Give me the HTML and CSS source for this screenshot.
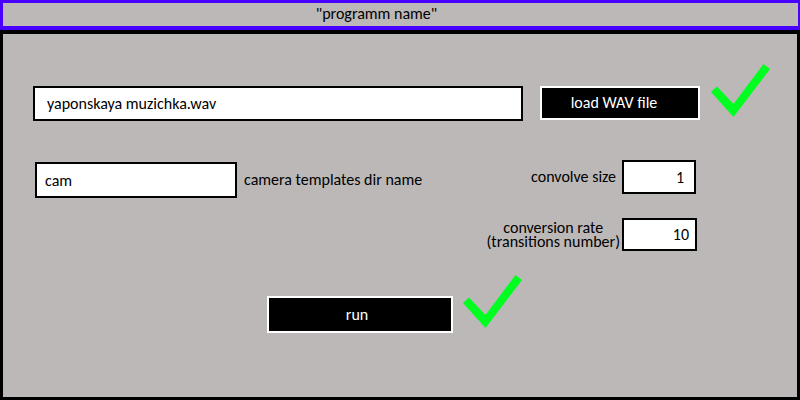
FILE: index.html
```html
<!DOCTYPE html>
<html lang="en">
<head>
  <meta charset="utf-8">
  <meta name="viewport" content="width=device-width, initial-scale=1">
  <title>"programm name"</title>
  <link rel="stylesheet" href="styles.css">
</head>
<body>
  <header class="titlebar"><h1 class="title">"programm name"</h1></header>
  <main class="window">
    <div class="file-row">
      <input class="field field-file" type="text" aria-label="WAV file" value="yaponskaya muzichka.wav">
      <button class="button button-load" type="button">load WAV file</button>
      <svg class="check" viewBox="0 0 59 53" role="img" aria-label="loaded"><path d="M0 28 6 22.5 22.5 40 52.5 0 59 5 22.5 53Z"/></svg>
    </div>
    <div class="options">
      <div class="template">
        <input class="field field-template" type="text" id="template" value="cam">
        <label for="template">camera templates dir name</label>
      </div>
      <div class="numbers">
        <label class="size-label" for="size">convolve size</label>
        <input class="field field-size" type="text" inputmode="numeric" id="size" value="1">
        <label class="rate-label" for="rate">conversion rate<br>(transitions number)</label>
        <input class="field field-rate" type="text" inputmode="numeric" id="rate" value="10">
      </div>
    </div>
    <div class="run-row">
      <button class="button button-run" type="button">run</button>
      <svg class="check" viewBox="0 0 59 53" role="img" aria-label="finished"><path d="M0 28 6 22.5 22.5 40 52.5 0 59 5 22.5 53Z"/></svg>
    </div>
  </main>
</body>
</html>
```
FILE: styles.css
```css
* {
  box-sizing: border-box;
}

body {
  display: flex;
  flex-direction: column;
  min-height: 100vh;
  margin: 0;
  background: #bcb8b7;
  color: #000;
  font: 16px/18px Carlito, Calibri, Lato, sans-serif;
}

.titlebar {
  padding: 2px 48px 3px 0;
  border: 3px solid #4800ff;
  border-width: 3px 2px 4px 3px;
}

.title {
  margin: 0;
  font: inherit;
  text-align: center;
}

.window {
  flex: 1;
  padding: 52px 27px 24px 30px;
  border: 3px solid #000;
  border-top-width: 4px;
}

.field {
  min-width: 0;
  margin: 0;
  border: 2px solid #000;
  border-radius: 0;
  background: #fff;
  color: #000;
  font: inherit;
}

.button {
  border: 2px solid #fff;
  border-radius: 0;
  background: #000;
  color: #fff;
  font: inherit;
}

.check {
  width: 59px;
  height: 53px;
  fill: #00ff21;
}

.file-row {
  display: grid;
  grid-template-columns: minmax(0, 1fr) 160px 70px;
  align-items: start;
}

.field-file {
  height: 35px;
  margin-right: 17px;
  padding: 0 12px;
}

.button-load {
  height: 34px;
  padding: 0 12px 0 0;
}

.file-row .check {
  justify-self: end;
  margin: -22px 0 -9px;
}

.options {
  display: flex;
  justify-content: space-between;
  align-items: flex-start;
  margin-top: 39px;
  padding: 0 73px 0 2px;
}

.template {
  display: flex;
  align-items: center;
  gap: 7px;
  padding-top: 2px;
}

.field-template {
  width: 202px;
  height: 36px;
  padding: 0 8px;
}

.numbers {
  display: grid;
  grid-template-columns: auto 75px;
  row-gap: 24px;
  align-items: center;
}

.field-size,
.field-rate {
  text-align: right;
}

.field-size {
  width: 74px;
  height: 34px;
  padding: 0 10px;
}

.field-rate {
  width: 75px;
  height: 33px;
  padding: 0 6px;
}

.size-label {
  padding-right: 6px;
  text-align: right;
}

.rate-label {
  padding-right: 2px;
  line-height: 14px;
  text-align: center;
}

.run-row {
  display: flex;
  justify-content: center;
  align-items: flex-start;
  gap: 10px;
  margin-top: 45px;
  padding-right: 14px;
}

.button-run {
  width: 186px;
  height: 37px;
  padding: 0 6px 0 0;
}

.run-row .check {
  margin-top: -21px;
}
```
